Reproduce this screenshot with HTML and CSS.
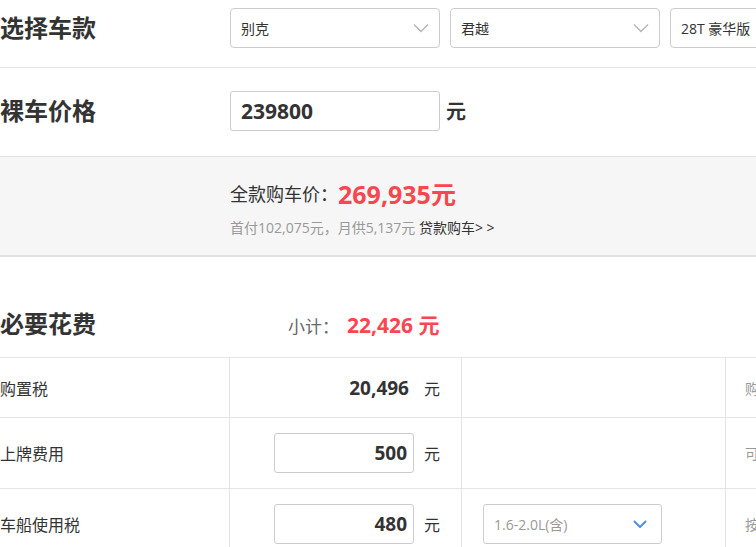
FILE: index.html
```html
<!DOCTYPE html>
<html lang="zh-CN">
<head>
    <meta charset="UTF-8">
    <meta name="viewport" content="width=device-width, initial-scale=1.0">
    <title>购车计算器</title>
    <link rel="stylesheet" href="styles.css">
</head>
<body>
    <div class="page">
        <div class="row row-model">
            <h2 class="row-title">选择车款</h2>
            <div class="select-box">
                <span>别克</span>
                <svg class="chev" width="16" height="10" viewBox="0 0 16 10"><polyline points="1,1.5 8,8.5 15,1.5" /></svg>
            </div>
            <div class="select-box">
                <span>君越</span>
                <svg class="chev" width="16" height="10" viewBox="0 0 16 10"><polyline points="1,1.5 8,8.5 15,1.5" /></svg>
            </div>
            <div class="select-box">
                <span>28T 豪华版</span>
                <svg class="chev" width="16" height="10" viewBox="0 0 16 10"><polyline points="1,1.5 8,8.5 15,1.5" /></svg>
            </div>
        </div>

        <div class="row row-price">
            <h2 class="row-title">裸车价格</h2>
            <input class="price-input" type="text" value="239800">
            <span class="price-unit">元</span>
        </div>

        <div class="total">
            <div class="total-line">全款购车价：<strong>269,935元</strong></div>
            <div class="total-sub">首付102,075元，月供5,137元 <a href="#">贷款购车&gt; &gt;</a></div>
        </div>

        <div class="fee-head">
            <h2 class="fee-title">必要花费</h2>
            <div class="subtotal">小计：<strong>22,426 元</strong></div>
        </div>

        <div class="fee-table">
            <div class="fee-row">
                <div class="cell cell-name">购置税</div>
                <div class="cell cell-value"><span class="fee-num">20,496</span><span class="unit">元</span></div>
                <div class="cell cell-option"></div>
                <div class="cell cell-note">购置税</div>
            </div>
            <div class="fee-row">
                <div class="cell cell-name">上牌费用</div>
                <div class="cell cell-value"><input class="fee-input" type="text" value="500"><span class="unit">元</span></div>
                <div class="cell cell-option"></div>
                <div class="cell cell-note">可选填</div>
            </div>
            <div class="fee-row">
                <div class="cell cell-name">车船使用税</div>
                <div class="cell cell-value"><input class="fee-input" type="text" value="480"><span class="unit">元</span></div>
                <div class="cell cell-option">
                    <div class="small-select">
                        <span>1.6-2.0L(含)</span>
                        <svg class="chev-blue" width="14" height="8" viewBox="0 0 14 8"><polyline points="1,1 7,7 13,1" /></svg>
                    </div>
                </div>
                <div class="cell cell-note">按排量</div>
            </div>
        </div>
    </div>
</body>
</html>
```

FILE: styles.css
```css
body {
    margin: 0;
    padding: 0;
    background-color: #fff;
    color: #333;
    font-family: "Open Sans", "Noto Sans CJK SC", sans-serif;
    overflow: hidden;
}

.page {
    width: 1000px;
}

.row {
    display: flex;
    align-items: center;
    border-bottom: 1px solid #e5e5e5;
}

.row-title {
    width: 230px;
    margin: 0;
    font-size: 24px;
    font-weight: bold;
    line-height: 34px;
    flex-shrink: 0;
}

.row-model {
    padding: 8px 0 19px;
}

.select-box {
    box-sizing: border-box;
    width: 210px;
    height: 40px;
    margin-right: 10px;
    padding: 0 10px;
    border: 1px solid #ccc;
    border-radius: 4px;
    display: flex;
    align-items: center;
    justify-content: space-between;
    font-size: 14px;
    flex-shrink: 0;
}

.chev polyline {
    fill: none;
    stroke: #b5b5b5;
    stroke-width: 1.4;
}

.row-price {
    height: 89px;
    box-sizing: border-box;
    padding-bottom: 3px;
    border-bottom: 1px solid #e3e3e3;
}

.price-input {
    box-sizing: border-box;
    width: 210px;
    height: 40px;
    padding: 0 10px;
    border: 1px solid #ccc;
    border-radius: 3px;
    font-family: inherit;
    font-size: 21px;
    font-weight: bold;
    color: #333;
}

.price-unit {
    margin-left: 6px;
    font-size: 20px;
    font-weight: bold;
}

.total {
    box-sizing: border-box;
    height: 100px;
    background-color: #f6f6f6;
    padding: 22px 0 0 230px;
    border-bottom: 2px solid #e1e1e1;
}

.total-line {
    height: 30px;
    font-size: 18px;
    line-height: 30px;
}

.total-line strong {
    color: #fa4650;
    font-size: 25px;
    line-height: 30px;
    vertical-align: top;
}

.total-sub {
    height: 20px;
    margin-top: 9px;
    font-size: 14px;
    line-height: 20px;
    color: #999;
}

.total-sub a {
    color: #333;
    text-decoration: none;
}

.fee-head {
    box-sizing: border-box;
    height: 100px;
    display: flex;
    align-items: center;
    padding-top: 34px;
}

.fee-title {
    width: 288px;
    margin: 0;
    font-size: 24px;
    font-weight: bold;
    line-height: 34px;
}

.subtotal {
    font-size: 17px;
    color: #666;
}

.subtotal strong {
    margin-left: 8px;
    font-size: 21px;
    color: #fa4650;
}

.fee-table {
    border-top: 1px solid #e5e5e5;
}

.fee-row {
    display: flex;
    border-bottom: 1px solid #e5e5e5;
}

.fee-row:first-child {
    height: 59px;
}

.fee-row + .fee-row {
    height: 70px;
}

.cell {
    box-sizing: border-box;
    display: flex;
    align-items: center;
    border-right: 1px solid #e5e5e5;
}

.cell-name {
    width: 230px;
    font-size: 16px;
}

.cell-value {
    width: 232px;
    justify-content: flex-end;
    padding-right: 21px;
}

.fee-num {
    font-size: 19px;
    font-weight: bold;
    padding-right: 5px;
}

.unit {
    width: 16px;
    margin-left: 10px;
    font-size: 16px;
}

.fee-input {
    box-sizing: border-box;
    width: 140px;
    height: 40px;
    padding: 0 6px;
    border: 1px solid #ccc;
    border-radius: 3px;
    text-align: right;
    font-family: inherit;
    font-size: 19px;
    font-weight: bold;
    color: #333;
}

.cell-option {
    width: 264px;
    padding-left: 21px;
}

.small-select {
    box-sizing: border-box;
    width: 179px;
    height: 40px;
    padding: 0 14px 0 10px;
    border: 1px solid #ccc;
    border-radius: 3px;
    display: flex;
    align-items: center;
    justify-content: space-between;
    font-size: 14px;
    color: #999;
}

.chev-blue polyline {
    fill: none;
    stroke: #4a8fe0;
    stroke-width: 2;
}

.cell-note {
    flex: 1;
    border-right: none;
    padding-left: 19px;
    font-size: 14px;
    color: #999;
    white-space: nowrap;
}
```
